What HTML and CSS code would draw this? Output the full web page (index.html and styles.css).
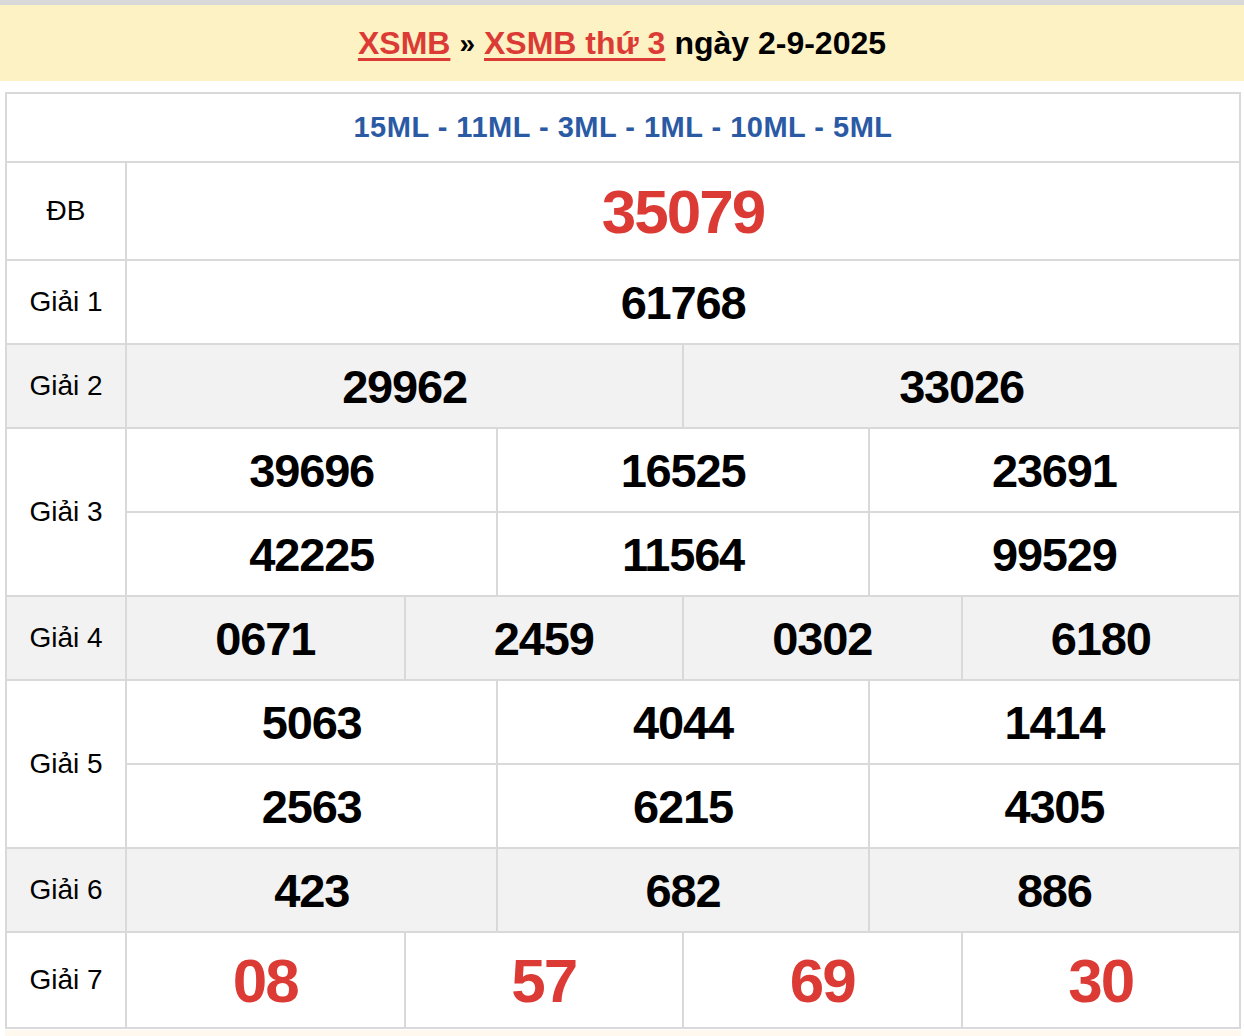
FILE: index.html
```html
<!DOCTYPE html>
<html lang="vi">
<head>
<meta charset="utf-8">
<title>XSMB thứ 3 ngày 2-9-2025</title>
<link rel="stylesheet" href="styles.css">
</head>
<body>
<div class="topbar"></div>
<h1 class="title"><a href="#" class="link">XSMB</a><span class="sep">»</span><a href="#" class="link">XSMB thứ 3</a><span class="date">ngày 2-9-2025</span></h1>
<div class="results">
  <div class="head">15ML - 11ML - 3ML - 1ML - 10ML - 5ML</div>

  <div class="label">ĐB</div>
  <div class="num s12 special">35079</div>

  <div class="label">Giải 1</div>
  <div class="num s12">61768</div>

  <div class="label alt">Giải 2</div>
  <div class="num s6 alt">29962</div>
  <div class="num s6 alt">33026</div>

  <div class="label r2">Giải 3</div>
  <div class="num s4">39696</div>
  <div class="num s4">16525</div>
  <div class="num s4">23691</div>
  <div class="num s4">42225</div>
  <div class="num s4">11564</div>
  <div class="num s4">99529</div>

  <div class="label alt">Giải 4</div>
  <div class="num s3 alt">0671</div>
  <div class="num s3 alt">2459</div>
  <div class="num s3 alt">0302</div>
  <div class="num s3 alt">6180</div>

  <div class="label r2">Giải 5</div>
  <div class="num s4">5063</div>
  <div class="num s4">4044</div>
  <div class="num s4">1414</div>
  <div class="num s4">2563</div>
  <div class="num s4">6215</div>
  <div class="num s4">4305</div>

  <div class="label alt">Giải 6</div>
  <div class="num s4 alt">423</div>
  <div class="num s4 alt">682</div>
  <div class="num s4 alt">886</div>

  <div class="label">Giải 7</div>
  <div class="num s3 special">08</div>
  <div class="num s3 special">57</div>
  <div class="num s3 special">69</div>
  <div class="num s3 special">30</div>
</div>
<div class="footer"></div>
</body>
</html>
```
FILE: styles.css
```css
html, body {
  margin: 0;
  padding: 0;
  background: #ffffff;
  font-family: "Liberation Sans", Arial, sans-serif;
  color: #000;
}

.topbar {
  height: 5px;
  background: #d9d9d9;
}

.title {
  margin: 0;
  height: 76px;
  padding-top: 1px;
  box-sizing: border-box;
  background: #fdf2c4;
  display: flex;
  align-items: center;
  justify-content: center;
  font-size: 32px;
  font-weight: bold;
  letter-spacing: 0;
  color: #000;
}

.title .link {
  color: #dc3b35;
  text-decoration: underline;
  text-decoration-thickness: 3px;
  text-underline-offset: 4px;
}

.title .sep {
  margin: 0 9px;
  font-size: 28px;
}

.title .date {
  margin-left: 9px;
}

.results {
  margin: 11px 3px 0 5px;
  display: grid;
  grid-template-columns: 118px repeat(12, 1fr);
  grid-template-rows: 67px 96px repeat(8, 82px) 94px;
  gap: 2px;
  padding: 2px;
  background: #d9d9d9;
}

.results > div {
  background: #ffffff;
  display: flex;
  align-items: center;
  justify-content: center;
}

.head {
  grid-column: 1 / -1;
  color: #2b5aa5;
  font-weight: bold;
  font-size: 29px;
  letter-spacing: 0.5px;
}

.label {
  font-size: 28px;
}

.r2 {
  grid-row: span 2;
}

.num {
  font-size: 47px;
  font-weight: bold;
  letter-spacing: -1.2px;
}

.special {
  color: #dc3b35;
  font-size: 62px;
  letter-spacing: -2px;
}

.s12 { grid-column: span 12; }
.s6 { grid-column: span 6; }
.s4 { grid-column: span 4; }
.s3 { grid-column: span 3; }

.results > .alt {
  background: #f2f2f2;
}

.footer {
  height: 6px;
  margin: 1px 3px 0 5px;
  background: #fef8ee;
}
```
